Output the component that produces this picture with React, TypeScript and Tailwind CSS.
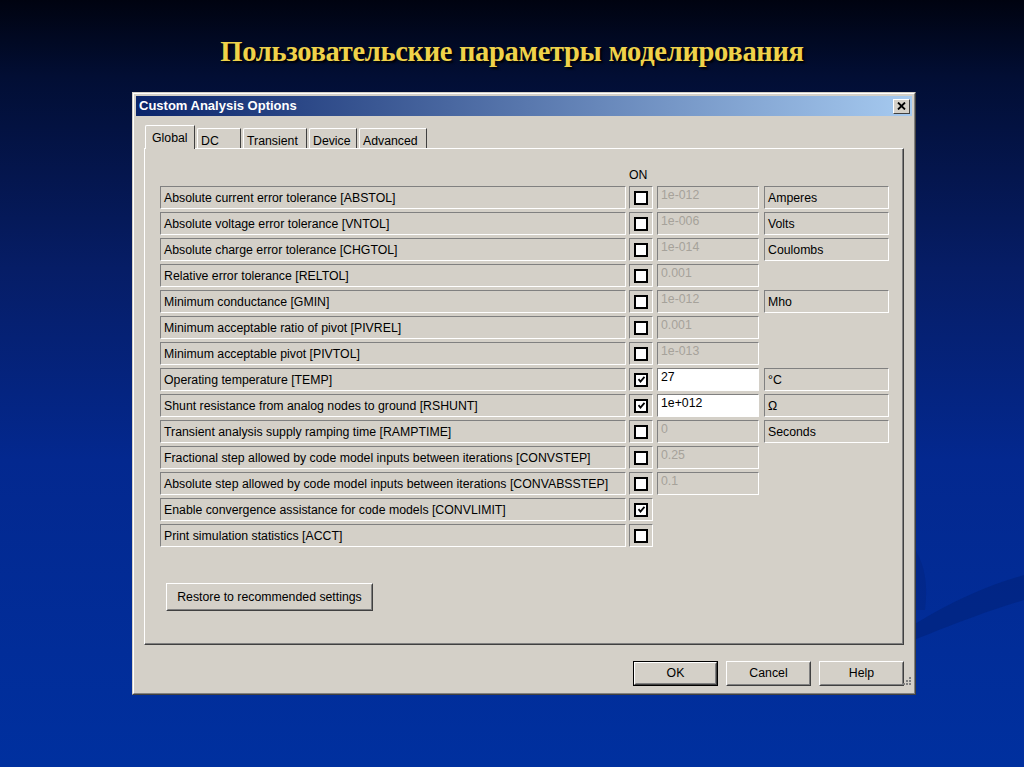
import React from 'react';

type Row = {
    label: string;
    on: boolean;
    value?: string;
    unit?: string;
};

const rows: Row[] = [
    { label: 'Absolute current error tolerance [ABSTOL]', on: false, value: '1e-012', unit: 'Amperes' },
    { label: 'Absolute voltage error tolerance [VNTOL]', on: false, value: '1e-006', unit: 'Volts' },
    { label: 'Absolute charge error tolerance [CHGTOL]', on: false, value: '1e-014', unit: 'Coulombs' },
    { label: 'Relative error tolerance [RELTOL]', on: false, value: '0.001' },
    { label: 'Minimum conductance [GMIN]', on: false, value: '1e-012', unit: 'Mho' },
    { label: 'Minimum acceptable ratio of pivot [PIVREL]', on: false, value: '0.001' },
    { label: 'Minimum acceptable pivot [PIVTOL]', on: false, value: '1e-013' },
    { label: 'Operating temperature [TEMP]', on: true, value: '27', unit: '°C' },
    { label: 'Shunt resistance from analog nodes to ground [RSHUNT]', on: true, value: '1e+012', unit: 'Ω' },
    { label: 'Transient analysis supply ramping time [RAMPTIME]', on: false, value: '0', unit: 'Seconds' },
    { label: 'Fractional step allowed by code model inputs between iterations [CONVSTEP]', on: false, value: '0.25' },
    { label: 'Absolute step allowed by code model inputs between iterations [CONVABSSTEP]', on: false, value: '0.1' },
    { label: 'Enable convergence assistance for code models [CONVLIMIT]', on: true },
    { label: 'Print simulation statistics [ACCT]', on: false },
];

const tabs = ['Global', 'DC', 'Transient', 'Device', 'Advanced'];
const tabWidths = ['w-[50px]', 'w-[44px]', 'w-[64px]', 'w-[48px]', 'w-[68px]'];

// sunken "static edge" frame used by all the cells
const sunken = 'border border-t-[#808080] border-l-[#808080] border-b-white border-r-white';

function Checkbox({ checked }: { checked: boolean }) {
    return (
        <div className="w-[14px] h-[14px] border-2 border-black bg-white flex items-center justify-center">
            {checked && (
                <svg width="9" height="9" viewBox="0 0 9 9">
                    <path d="M1.5 4.2 L3.5 6.5 L7.5 1.8" fill="none" stroke="#000" strokeWidth="1.8" />
                </svg>
            )}
        </div>
    );
}

function ClassicButton({ label, isDefault, className }: { label: string; isDefault?: boolean; className: string }) {
    return (
        <div className={`${className} ${isDefault ? 'border border-black' : ''}`}>
            <div className="h-full border border-t-white border-l-white border-b-[#404040] border-r-[#404040]">
                <div className="h-full border border-t-[#d4d0c8] border-l-[#d4d0c8] border-b-[#808080] border-r-[#808080] flex items-center justify-center text-black">
                    {label}
                </div>
            </div>
        </div>
    );
}

function OptionRow({ row }: { row: Row }) {
    const enabled = row.on && row.value !== undefined;
    return (
        <div className="flex h-[23px]">
            <div className={`w-[466px] ${sunken} flex items-center pl-[3px] pt-[1px] text-black`}>{row.label}</div>
            <div className={`ml-[3px] w-[24px] ${sunken} flex items-center justify-center`}>
                <Checkbox checked={row.on} />
            </div>
            {row.value !== undefined && (
                <div
                    className={`ml-[4px] w-[102px] ${sunken} pl-[3px] leading-[16px] ${enabled ? 'bg-white text-black' : 'text-[#a6a29a]'}`}
                >
                    {row.value}
                </div>
            )}
            {row.unit && (
                <div className={`ml-[5px] w-[125px] ${sunken} flex items-center pl-[3px] pt-[2px] text-black`}>{row.unit}</div>
            )}
        </div>
    );
}

export default function App() {
    return (
        <div className="relative w-full h-[767px] overflow-hidden bg-[linear-gradient(180deg,#000310_0%,#020e34_10%,#061d66_35%,#03288f_60%,#00309f_100%)]">
            {/* background swoosh */}
            <svg className="absolute inset-0" width="1024" height="767" viewBox="0 0 1024 767">
                <path d="M890 640 C 950 600, 990 585, 1024 575 L 1024 600 C 990 610, 950 625, 890 650 Z" fill="#02247f" opacity="0.7" />
                <path d="M880 520 C 920 540, 930 570, 925 610 L 915 610 C 915 570, 905 545, 880 530 Z" fill="#02247f" opacity="0.5" />
            </svg>

            <div className="relative">
                {/* Slide title */}
                <div className="pt-[36px] text-center leading-[32px] text-[28.5px] font-bold tracking-[-0.3px] font-['Liberation_Serif','Times_New_Roman',serif] text-[#efd24a] [text-shadow:2px_2px_2px_rgba(0,0,0,0.9)]">
                    Пользовательские параметры моделирования
                </div>

                {/* Dialog window */}
                <div className="mt-[24px] ml-[132px] w-[784px] h-[603px] border border-t-[#d4d0c8] border-l-[#d4d0c8] border-b-[#404040] border-r-[#404040] font-['Liberation_Sans',Arial,sans-serif] text-[12.3px]">
                    <div className="h-full border border-t-white border-l-white border-b-[#808080] border-r-[#808080] bg-[#d4d0c8] p-[2px] flex flex-col">
                        {/* Title bar */}
                        <div className="h-[20px] flex items-center justify-between bg-[linear-gradient(90deg,#0a246a,#a6caf0)] pl-[3px] pr-[2px]">
                            <span className="text-white font-bold text-[13px]">Custom Analysis Options</span>
                            <div className="w-[17px] h-[15px] border border-t-white border-l-white border-b-[#404040] border-r-[#404040] bg-[#d4d0c8] flex items-center justify-center">
                                <svg width="9" height="8" viewBox="0 0 9 8">
                                    <path d="M1 0.5 L8 7.5 M8 0.5 L1 7.5" stroke="#000" strokeWidth="1.8" />
                                </svg>
                            </div>
                        </div>

                        {/* Body */}
                        <div className="px-[8px] pt-[9px] flex flex-col">
                            {/* Tabs */}
                            <div className="h-[23px] flex items-end pl-[1px]">
                                {tabs.map((t, i) => (
                                    <div
                                        key={t}
                                        className={`${tabWidths[i]} ${
                                            i === 0
                                                ? 'relative z-10 h-[24px] -mb-[1px] bg-[#d4d0c8] pl-[6px] pt-[3px]'
                                                : 'h-[20px] ml-[2px] pl-[3px] pt-[3px]'
                                        } border-t border-l border-r border-t-white border-l-white border-r-[#404040] rounded-tl-[2px] text-black`}
                                    >
                                        {t}
                                    </div>
                                ))}
                            </div>

                            {/* Tab panel */}
                            <div className="h-[497px] border border-t-white border-l-white border-b-[#404040] border-r-[#404040]">
                                <div className="h-full border-b border-r border-b-[#808080] border-r-[#808080] pl-[15px] pt-[17px]">
                                    <div className="h-[14px] mb-[6px] flex">
                                        <span className="ml-[469px] text-black">ON</span>
                                    </div>
                                    <div className="flex flex-col gap-[3px]">
                                        {rows.map((r) => (
                                            <OptionRow key={r.label} row={r} />
                                        ))}
                                    </div>
                                    <ClassicButton
                                        label="Restore to recommended settings"
                                        className="mt-[36px] ml-[6px] w-[207px] h-[28px]"
                                    />
                                </div>
                            </div>

                            {/* Buttons */}
                            <div className="mt-[16px] flex justify-end gap-[8px]">
                                <ClassicButton label="OK" isDefault className="w-[85px] h-[25px]" />
                                <ClassicButton label="Cancel" className="w-[85px] h-[25px]" />
                                <ClassicButton label="Help" className="w-[85px] h-[25px]" />
                            </div>
                        </div>
                        {/* Size grip */}
                        <div className="flex justify-end -mt-[10px]">
                            <svg width="10" height="10" viewBox="0 0 10 10">
                                <rect x="7" y="1" width="2" height="2" fill="#808080" />
                                <rect x="4" y="4" width="2" height="2" fill="#808080" />
                                <rect x="7" y="4" width="2" height="2" fill="#808080" />
                                <rect x="1" y="7" width="2" height="2" fill="#808080" />
                                <rect x="4" y="7" width="2" height="2" fill="#808080" />
                                <rect x="7" y="7" width="2" height="2" fill="#808080" />
                            </svg>
                        </div>
                    </div>
                </div>
            </div>
        </div>
    );
}
